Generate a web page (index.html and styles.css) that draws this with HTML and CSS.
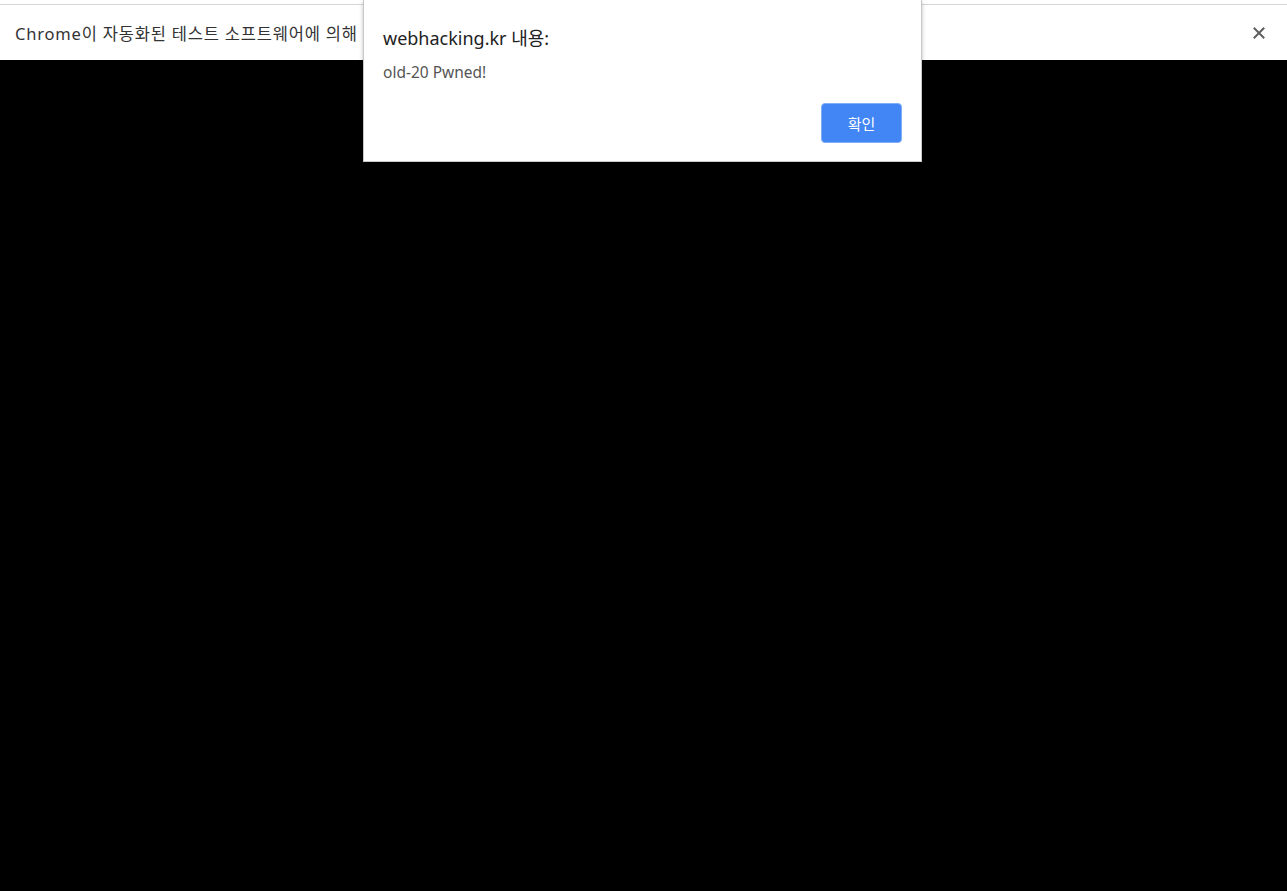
FILE: index.html
```html
<!DOCTYPE html>
<html lang="ko">
<head>
<meta charset="utf-8">
<title>webhacking.kr</title>
<link rel="stylesheet" href="styles.css">
</head>
<body>
<div class="topstrip"></div>
<div class="infobar">
  <span class="info-text">Chrome이 자동화된 테스트 소프트웨어에 의해</span>
  <span class="close">
    <svg width="12" height="12" viewBox="0 0 12 12"><path d="M1.5 1.5 L10.5 10.5 M10.5 1.5 L1.5 10.5" stroke="#5f5f5f" stroke-width="2" stroke-linecap="square"/></svg>
  </span>
</div>
<main class="page"></main>
<div class="dialog">
  <div class="dlg-title">webhacking.kr 내용:</div>
  <div class="dlg-msg">old-20 Pwned!</div>
  <div class="dlg-actions"><button class="dlg-btn">확인</button></div>
</div>
</body>
</html>
```
FILE: styles.css
```css
html, body {
  margin: 0;
  padding: 0;
  height: 100%;
  background: #000;
  font-family: "Noto Sans", "Noto Sans CJK KR", sans-serif;
}
body {
  display: flex;
  flex-direction: column;
}
.topstrip {
  height: 4px;
  background: #fff;
  border-bottom: 1px solid #d6d6d6;
}
.infobar {
  height: 55px;
  background: #fff;
  display: flex;
  align-items: center;
  justify-content: space-between;
  padding: 0 22px 0 15px;
  box-sizing: border-box;
}
.info-text {
  font-size: 16.5px;
  letter-spacing: 0.8px;
  color: #333;
  white-space: nowrap;
}
.close {
  display: flex;
  align-items: center;
}
.page {
  flex: 1;
  background: #000;
}
.dialog {
  position: absolute;
  top: 0;
  left: 363px;
  width: 559px;
  height: 162px;
  box-sizing: border-box;
  background: #fff;
  border: 1px solid #c8c8c8;
  border-top: none;
  box-shadow: 0 2px 4px rgba(0,0,0,0.25);
  padding: 24px 19px 0 19px;
}
.dlg-title {
  font-size: 18px;
  color: #222;
  line-height: 28px;
}
.dlg-msg {
  font-size: 15.5px;
  color: #555;
  margin-top: 10px;
  line-height: 20px;
}
.dlg-actions {
  display: flex;
  justify-content: flex-end;
  margin-top: 21px;
}
.dlg-btn {
  width: 81px;
  height: 40px;
  background: #4285f4;
  border: 1px solid #7eaef5;
  border-radius: 4px;
  color: #fff;
  font-family: "Noto Sans CJK KR", sans-serif;
  font-size: 15px;
  padding: 0;
}
```
